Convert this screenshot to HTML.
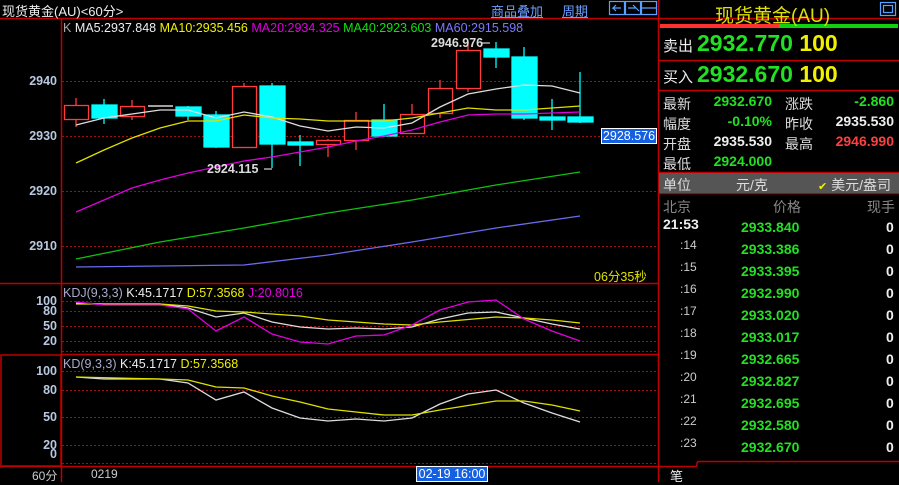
<!DOCTYPE html><html><head><meta charset="utf-8"><style>
body{margin:0;background:#000;width:899px;height:482px;overflow:hidden;font-family:"Liberation Sans","Noto Sans CJK SC",sans-serif;position:relative}
.a{position:absolute;white-space:nowrap}
.rp{font-size:14px;color:#ddd}
.g{color:#22e022}.y{color:#f0f000}.w{color:#eee}.r{color:#ff4040}
</style></head><body>
<svg class="a" style="left:0;top:0" width="899" height="482">
<g stroke="#c00000" fill="none" stroke-width="1.5">
<line x1="0" y1="18.5" x2="899" y2="18.5"/>
<line x1="61.5" y1="18" x2="61.5" y2="482"/>
<line x1="658.5" y1="0" x2="658.5" y2="482"/>
<line x1="0" y1="283.5" x2="658" y2="283.5"/>
<line x1="61" y1="354.5" x2="658" y2="354.5"/>
<line x1="0" y1="466.5" x2="658" y2="466.5"/>
<rect x="1" y="355" width="60" height="111"/>
<line x1="658" y1="60.5" x2="899" y2="60.5"/>
<line x1="658" y1="90.5" x2="899" y2="90.5"/>
<line x1="658" y1="172.5" x2="899" y2="172.5"/>
<line x1="658" y1="193.5" x2="899" y2="193.5"/>
<path d="M658 466.5H695q2 0 2-2v-1q0-2 2-2H899"/>
</g>
<g stroke="#a01010" stroke-dasharray="2 2" stroke-width="1">
<line x1="62" y1="81.5" x2="658" y2="81.5"/><line x1="62" y1="136.5" x2="658" y2="136.5"/>
<line x1="62" y1="191.5" x2="658" y2="191.5"/><line x1="62" y1="246.5" x2="658" y2="246.5"/>
<line x1="62" y1="301.5" x2="658" y2="301.5"/><line x1="62" y1="311.5" x2="658" y2="311.5"/>
<line x1="62" y1="326.5" x2="658" y2="326.5"/><line x1="62" y1="341.5" x2="658" y2="341.5"/>
<line x1="62" y1="351.5" x2="658" y2="351.5"/>
<line x1="62" y1="371.5" x2="658" y2="371.5"/><line x1="62" y1="390.5" x2="658" y2="390.5"/>
<line x1="62" y1="417.5" x2="658" y2="417.5"/><line x1="62" y1="445.5" x2="658" y2="445.5"/>
<line x1="62" y1="463.5" x2="658" y2="463.5"/>
</g>
<rect x="660" y="24" width="119" height="4" fill="#ff3030"/><rect x="779" y="24" width="119" height="4" fill="#10d010"/>
<rect x="659" y="173" width="240" height="20" fill="#555"/>
<g stroke-width="1.3">
<g stroke="#ff3b3b" fill="none">
<line x1="76" y1="98" x2="76" y2="127"/><rect x="64.5" y="105.5" width="24" height="14" fill="#000"/>
<line x1="132" y1="100" x2="132" y2="120"/><rect x="120.5" y="106.5" width="24" height="10" fill="#000"/>
<line x1="244" y1="83" x2="244" y2="148"/><rect x="232.5" y="86.5" width="24" height="61" fill="#000"/>
<line x1="328" y1="139" x2="328" y2="157"/><rect x="316.5" y="140.5" width="24" height="4" fill="#000"/>
<line x1="356" y1="112" x2="356" y2="150"/><rect x="344.5" y="120.5" width="24" height="20" fill="#000"/>
<line x1="412" y1="104" x2="412" y2="133"/><rect x="400.5" y="114.5" width="24" height="19" fill="#000"/>
<line x1="440" y1="80" x2="440" y2="118"/><rect x="428.5" y="88.5" width="24" height="25" fill="#000"/>
<line x1="468" y1="42" x2="468" y2="92"/><rect x="456.5" y="50.5" width="24" height="38" fill="#000"/>
</g>
<line x1="148" y1="106" x2="173" y2="106" stroke="#fff"/>
<g stroke="#00ffff" fill="#00ffff">
<line x1="104" y1="99" x2="104" y2="124"/><rect x="92" y="105" width="25" height="13"/>
<line x1="188" y1="106" x2="188" y2="120"/><rect x="176" y="107" width="25" height="9"/>
<line x1="216" y1="111" x2="216" y2="148"/><rect x="204" y="115" width="25" height="32"/>
<line x1="272" y1="83" x2="272" y2="168"/><rect x="260" y="86" width="25" height="58"/>
<line x1="300" y1="135" x2="300" y2="166"/><rect x="288" y="142" width="25" height="3"/>
<line x1="384" y1="104" x2="384" y2="137"/><rect x="372" y="120" width="25" height="16"/>
<line x1="496" y1="42" x2="496" y2="68"/><rect x="484" y="49" width="25" height="8"/>
<line x1="524" y1="47" x2="524" y2="120"/><rect x="512" y="57" width="25" height="61"/>
<line x1="552" y1="99" x2="552" y2="130"/><rect x="540" y="117" width="25" height="3"/>
<line x1="580" y1="72" x2="580" y2="123"/><rect x="568" y="117" width="25" height="5"/>
</g></g>
<g fill="none" stroke-width="1.3">
<polyline stroke="#ddd" points="76,125 104,118 132,114 160,110 188,110 216,118 244,112 272,117 300,126 328,131 356,127 384,128 412,123 440,107 468,94 496,89 524,85 552,86 580,93"/>
<polyline stroke="#e0e000" points="76,163 104,150 132,138 160,128 188,121 216,121 244,115 272,118 300,119 328,121 356,121 384,121 412,118 440,113 468,108 496,110 524,110 552,108 580,106"/>
<polyline stroke="#e000e0" points="76,212 104,200 132,188 160,180 188,173 216,167 244,161 272,157 300,152 328,147 356,141 384,136 412,130 440,122 468,115 496,114 524,114 552,113 580,112"/>
<polyline stroke="#10c010" points="76,259 160,242 244,228 328,213 412,200 496,185 580,172"/>
<polyline stroke="#6a6aee" points="76,267 244,265 328,255 412,242 496,228 580,216"/>
<polyline stroke="#ddd" points="76,303 104,304 160,304 188,308 216,317 244,313 272,322 300,327 328,329 356,328 384,329 412,327 440,319 468,313 496,312 524,318 552,324 580,329"/>
<polyline stroke="#e0e000" points="76,304 160,304 188,306 216,311 244,312 272,314 300,316 328,320 356,322 384,324 412,325 440,322 496,317 524,318 552,320 580,323"/>
<polyline stroke="#e000e0" points="76,302 104,305 160,305 188,309 216,331 244,317 272,334 300,342 328,344 356,336 384,335 412,325 440,310 468,302 496,300 524,319 552,331 580,341"/>
<polyline stroke="#ddd" points="76,377 104,379 160,379 188,383 216,400 244,392 272,408 300,418 328,421 356,419 384,421 412,418 440,404 468,394 496,390 524,403 552,413 580,422"/>
<polyline stroke="#e0e000" points="76,377 160,379 188,380 216,387 244,388 272,396 300,402 328,409 356,412 384,415 412,415 440,410 496,401 524,401 552,405 580,411"/>
<path d="M264 169h8M481 43h9" stroke="#ccc"/>
</g>
<g fill="none" stroke="#5aa0ff" stroke-width="1.2">
<rect x="609.5" y="1.5" width="15" height="13"/><rect x="625.5" y="1.5" width="15" height="13"/><rect x="641.5" y="1.5" width="15" height="13"/>
<path d="M621 8h-8l3-3M613 8l3 3M628 8h8l-3-3M636 8l3 3M642 8h14"/>
<rect x="880.5" y="2.5" width="15" height="13"/><rect x="883.5" y="5.5" width="9" height="7"/>
</g>
</svg>
<div class="a" style="left:2px;top:1px;font-size:13px;color:#eee">现货黄金(AU)&lt;60分&gt;</div>
<div class="a" style="left:491px;top:1px;font-size:13px;color:#6aa0ff;text-decoration:underline">商品叠加</div>
<div class="a" style="left:562px;top:1px;font-size:13px;color:#6aa0ff;text-decoration:underline">周期</div>
<div class="a" style="left:63px;top:21px;font-size:12.5px"><span style="color:#aaa">K</span> <span class="w">MA5:2937.848</span> <span class="y">MA10:2935.456</span> <span style="color:#e000e0">MA20:2934.325</span> <span style="color:#10e010">MA40:2923.603</span> <span style="color:#7a7aff">MA60:2915.598</span></div>
<div class="a" style="left:431px;top:36px;font-size:12.5px;font-weight:bold;color:#ddd">2946.976</div>
<div class="a" style="left:207px;top:162px;font-size:12.5px;font-weight:bold;color:#ddd">2924.115</div>
<div class="a" style="left:601px;top:128px;width:56px;height:16px;background:#1560e0;border:1px solid #fff;box-sizing:border-box;color:#fff;font-size:12.5px;line-height:14px;text-align:center">2928.576</div>
<div class="a" style="left:594px;top:266px;font-size:12.5px;color:#e0e000">06分35秒</div>
<div class="a" style="left:0;top:74px;width:57px;text-align:right;font-size:12.5px;font-weight:bold;color:#b8c8e0;line-height:15px">2940</div>
<div class="a" style="left:0;top:129px;width:57px;text-align:right;font-size:12.5px;font-weight:bold;color:#b8c8e0">2930</div>
<div class="a" style="left:0;top:184px;width:57px;text-align:right;font-size:12.5px;font-weight:bold;color:#b8c8e0">2920</div>
<div class="a" style="left:0;top:239px;width:57px;text-align:right;font-size:12.5px;font-weight:bold;color:#b8c8e0">2910</div>
<div style="position:absolute;left:0;top:0;font-size:12.5px;font-weight:bold;color:#b8c8e0">
<div class="a" style="left:0;top:294px;width:57px;text-align:right">100</div>
<div class="a" style="left:0;top:304px;width:57px;text-align:right">80</div>
<div class="a" style="left:0;top:319px;width:57px;text-align:right">50</div>
<div class="a" style="left:0;top:334px;width:57px;text-align:right">20</div>
<div class="a" style="left:0;top:364px;width:57px;text-align:right">100</div>
<div class="a" style="left:0;top:383px;width:57px;text-align:right">80</div>
<div class="a" style="left:0;top:410px;width:57px;text-align:right">50</div>
<div class="a" style="left:0;top:438px;width:57px;text-align:right">20</div>
<div class="a" style="left:0;top:447px;width:57px;text-align:right">0</div></div>
<div class="a" style="left:63px;top:286px;font-size:12.5px"><span style="color:#aac">KDJ(9,3,3)</span> <span class="w">K:45.1717</span> <span class="y">D:57.3568</span> <span style="color:#e000e0">J:20.8016</span></div>
<div class="a" style="left:63px;top:357px;font-size:12.5px"><span style="color:#aac">KD(9,3,3)</span> <span class="w">K:45.1717</span> <span class="y">D:57.3568</span></div>
<div class="a" style="left:32px;top:467px;font-size:12px;color:#ccc">60分</div>
<div class="a" style="left:91px;top:467px;font-size:12px;color:#ccc">0219</div>
<div class="a" style="left:416px;top:466px;width:72px;height:16px;background:#1560e0;border:1px solid #fff;box-sizing:border-box;color:#fff;font-size:12.5px;line-height:15px;text-align:center">02-19 16:00</div>
<div class="a" style="left:715px;top:1px;font-size:19px;color:#e0e000">现货黄金(AU)</div>
<div class="a" style="left:663px;top:35px;font-size:15px;color:#eee">卖出</div>
<div class="a" style="left:697px;top:30px;font-size:23px;font-weight:bold"><span class="g">2932.770</span> <span class="y">100</span></div>
<div class="a" style="left:663px;top:66px;font-size:15px;color:#eee">买入</div>
<div class="a" style="left:697px;top:61px;font-size:23px;font-weight:bold"><span class="g">2932.670</span> <span class="y">100</span></div>
<div class="rp">
<div class="a" style="left:663px;top:94px">最新</div><div class="a g" style="left:700px;top:93px;width:72px;text-align:right;font-weight:bold;font-size:14px">2932.670</div>
<div class="a" style="left:785px;top:94px">涨跌</div><div class="a g" style="left:820px;top:93px;width:74px;text-align:right;font-weight:bold;font-size:14px">-2.860</div>
<div class="a" style="left:663px;top:114px">幅度</div><div class="a g" style="left:700px;top:113px;width:72px;text-align:right;font-weight:bold;font-size:14px">-0.10%</div>
<div class="a" style="left:785px;top:114px">昨收</div><div class="a w" style="left:820px;top:113px;width:74px;text-align:right;font-weight:bold;font-size:14px">2935.530</div>
<div class="a" style="left:663px;top:134px">开盘</div><div class="a w" style="left:700px;top:133px;width:72px;text-align:right;font-weight:bold;font-size:14px">2935.530</div>
<div class="a" style="left:785px;top:134px">最高</div><div class="a r" style="left:820px;top:133px;width:74px;text-align:right;font-weight:bold;font-size:14px">2946.990</div>
<div class="a" style="left:663px;top:154px">最低</div><div class="a g" style="left:700px;top:153px;width:72px;text-align:right;font-weight:bold;font-size:14px">2924.000</div>
<div class="a" style="left:663px;top:175px">单位</div><div class="a" style="left:736px;top:175px">元/克</div>
<div class="a" style="left:818px;top:175px"><span class="y" style="font-size:11px">✔</span> 美元/盎司</div>
<div class="a" style="left:663px;top:197px;color:#888">北京</div><div class="a" style="left:773px;top:197px;color:#888">价格</div><div class="a" style="left:867px;top:197px;color:#888">现手</div>
</div>
<div style="position:absolute;left:0;top:0;font-size:14px;font-weight:bold">
<div class="a w" style="left:663px;top:216px">21:53</div>
<div class="a" style="left:680px;top:238px;color:#ccc;font-weight:normal;font-size:12px">:14</div>
<div class="a" style="left:680px;top:260px;color:#ccc;font-weight:normal;font-size:12px">:15</div>
<div class="a" style="left:680px;top:282px;color:#ccc;font-weight:normal;font-size:12px">:16</div>
<div class="a" style="left:680px;top:304px;color:#ccc;font-weight:normal;font-size:12px">:17</div>
<div class="a" style="left:680px;top:326px;color:#ccc;font-weight:normal;font-size:12px">:18</div>
<div class="a" style="left:680px;top:348px;color:#ccc;font-weight:normal;font-size:12px">:19</div>
<div class="a" style="left:680px;top:370px;color:#ccc;font-weight:normal;font-size:12px">:20</div>
<div class="a" style="left:680px;top:392px;color:#ccc;font-weight:normal;font-size:12px">:21</div>
<div class="a" style="left:680px;top:414px;color:#ccc;font-weight:normal;font-size:12px">:22</div>
<div class="a" style="left:680px;top:436px;color:#ccc;font-weight:normal;font-size:12px">:23</div>
<div class="a g" style="left:741px;top:216px;line-height:22px">2933.840<br>2933.386<br>2933.395<br>2932.990<br>2933.020<br>2933.017<br>2932.665<br>2932.827<br>2932.695<br>2932.580<br>2932.670</div>
<div class="a w" style="left:886px;top:216px;line-height:22px">0<br>0<br>0<br>0<br>0<br>0<br>0<br>0<br>0<br>0<br>0</div>
</div>
<div class="a w" style="left:670px;top:466px;font-size:13px">笔</div>
</body></html>
